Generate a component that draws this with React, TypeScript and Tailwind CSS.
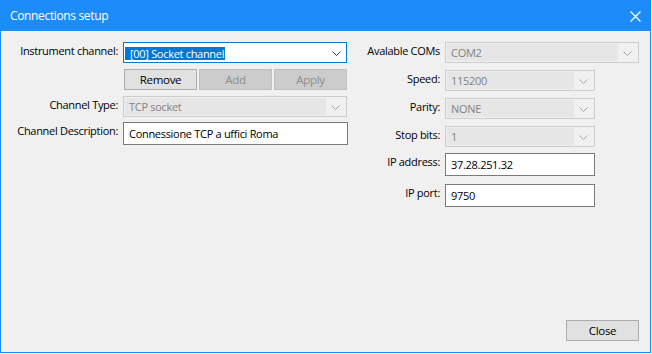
import React from "react";

const font = { fontFamily: '"Open Sans", "Noto Sans", sans-serif' };

function Chevron({ disabled }: { disabled?: boolean }) {
  return (
    <svg width="9" height="5" viewBox="0 0 9 5" className="block">
      <polyline
        points="0.5,0.5 4.5,4.5 8.5,0.5"
        fill="none"
        stroke={disabled ? "#a8a8a8" : "#3c3c3c"}
        strokeWidth="1"
      />
    </svg>
  );
}

function ComboDisabled({ value, width }: { value: string; width: string }) {
  return (
    <div
      className={`flex h-[21px] ${width} shrink-0 items-stretch border border-[#cccccc] bg-[#f0f0f0] p-[1px]`}
    >
      <div className="flex flex-1 items-center bg-[#e6e6e6] pl-[4px] pt-[1px] text-[#838383]">
        {value}
      </div>
      <div className="flex w-[19px] items-center justify-center pt-[1px]">
        <Chevron disabled />
      </div>
    </div>
  );
}

function TextBox({ value, width }: { value: string; width: string }) {
  return (
    <div
      className={`flex h-[23px] ${width} shrink-0 items-center border border-[#7a7a7a] bg-white pl-[5px] pt-[1px] text-black`}
    >
      {value}
    </div>
  );
}

function Btn({ label, disabled, width = "w-[73px]" }: { label: string; disabled?: boolean; width?: string }) {
  return (
    <div
      className={`flex h-[21px] ${width} items-center justify-center border text-[11.5px] ${
        disabled
          ? "border-[#bfbfbf] bg-[#cccccc] text-[#8d8d8d]"
          : "border-[#adadad] bg-[#e1e1e1] text-black"
      }`}
    >
      {label}
    </div>
  );
}

function Row({
  label,
  labelWidth,
  children,
  className = "",
}: {
  label?: string;
  labelWidth: string;
  children: React.ReactNode;
  className?: string;
}) {
  return (
    <div className={`flex items-start gap-[5px] ${className}`}>
      <div className={`${labelWidth} shrink-0 pt-[1px] text-right text-black`}>{label}</div>
      {children}
    </div>
  );
}

export default function App() {
  return (
    <div
      className="h-[354px] w-[652px] bg-[#f4f8fc] text-[11px] leading-[16px] tracking-[-0.3px]"
      style={font}
    >
      <div className="flex h-[353px] w-[651px] flex-col border border-[#1c8cf8] bg-[#f0f0f0]">
        <div className="flex h-[30px] shrink-0 items-center justify-between bg-[#1c8cf8] pl-[9px] pr-[9px] text-white">
          <span className="text-[12px] tracking-[-0.35px]">Connections setup</span>
          <svg width="11" height="11" viewBox="0 0 11 11">
            <path d="M0.5 0.5 L10.5 10.5 M10.5 0.5 L0.5 10.5" stroke="#ffffff" strokeWidth="1.2" />
          </svg>
        </div>

        <div className="flex flex-1 flex-col pt-[11px]">
          <div className="flex flex-1">
            {/* left panel */}
            <div className="flex w-[346px] flex-col">
              <Row label="Instrument channel:" labelWidth="w-[117px]">
                <div className="flex h-[21px] w-[224px] items-center border border-[#0078d7] bg-white pl-[1px]">
                  <span className="mt-[1px] inline-block h-[13px] bg-[#0078d7] pl-[5px] pr-[1px] leading-[13px] text-white">
                    [00] Socket channel
                  </span>
                  <div className="flex-1" />
                  <div className="flex w-[19px] items-center justify-center pt-[1px]">
                    <Chevron />
                  </div>
                </div>
              </Row>
              <div className="mt-[6px] flex gap-[2px] pl-[123px]">
                <Btn label="Remove" />
                <Btn label="Add" disabled />
                <Btn label="Apply" disabled />
              </div>
              <Row label="Channel Type:" labelWidth="w-[117px]" className="mt-[6px]">
                <ComboDisabled value="TCP socket" width="w-[224px]" />
              </Row>
              <Row label="Channel Description:" labelWidth="w-[117px]" className="mt-[5px]">
                <TextBox value="Connessione TCP a uffici Roma" width="w-[225px]" />
              </Row>
            </div>

            {/* right panel */}
            <div className="flex flex-1 flex-col">
              <Row label="Avalable COMs" labelWidth="w-[93px]">
                <ComboDisabled value="COM2" width="w-[194px]" />
              </Row>
              <Row label="Speed:" labelWidth="w-[93px]" className="mt-[7px]">
                <ComboDisabled value="115200" width="w-[150px]" />
              </Row>
              <Row label="Parity:" labelWidth="w-[93px]" className="mt-[7px]">
                <ComboDisabled value="NONE" width="w-[150px]" />
              </Row>
              <Row label="Stop bits:" labelWidth="w-[93px]" className="mt-[7px]">
                <ComboDisabled value="1" width="w-[150px]" />
              </Row>
              <Row label="IP address:" labelWidth="w-[93px]" className="mt-[6px]">
                <TextBox value="37.28.251.32" width="w-[150px]" />
              </Row>
              <Row label="IP port:" labelWidth="w-[93px]" className="mt-[8px]">
                <TextBox value="9750" width="w-[150px]" />
              </Row>
            </div>
          </div>

          <div className="flex justify-end pb-[11px] pr-[11px]">
            <Btn label="Close" />
          </div>
        </div>
      </div>
    </div>
  );
}
